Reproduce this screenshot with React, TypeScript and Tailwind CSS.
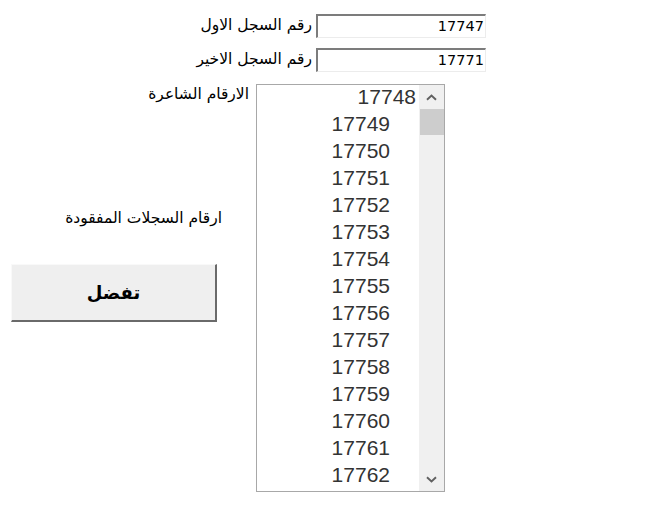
import React from "react";

const items = [17748, 17749, 17750, 17751, 17752, 17753, 17754, 17755, 17756, 17757, 17758, 17759, 17760, 17761, 17762];

function Field({ label, value }: { label: string; value: string }) {
  return (
    <div className="flex items-center justify-end w-[486px] h-[24px]">
      <span className="text-[15.5px] text-black mr-[4px] leading-none" dir="rtl" style={{ fontFamily: '"DejaVu Sans", sans-serif' }}>
        {label}
      </span>
      <div className="w-[170px] h-[24px] bg-white border-t-2 border-l-2 border-r border-b border-t-[#7c7c7c] border-l-[#7c7c7c] border-r-[#ececec] border-b-[#ececec] flex items-center justify-end pr-[1px] text-[14.5px] text-black" style={{ fontFamily: '"DejaVu Sans", sans-serif' }}>
        {value}
      </div>
    </div>
  );
}

export default function App() {
  return (
    <div className="w-[671px] h-[507px] bg-white relative overflow-hidden" style={{ fontFamily: '"DejaVu Sans", sans-serif' }}>
      <div className="flex flex-col pt-[14px] gap-[10px]">
        <Field label="رقم السجل الاول" value="17747" />
        <Field label="رقم السجل الاخير" value="17771" />
      </div>
      <div className="flex mt-[12px]">
        <div className="w-[256px] flex flex-col">
          <div className="text-right pr-[7px] text-[15.5px] leading-[20px]" dir="rtl">الارقام الشاعرة</div>
          <div className="text-right pr-[34px] text-[15.5px] leading-[20px] mt-[104px]" dir="rtl">ارقام السجلات المفقودة</div>
          <button className="ml-[11px] mt-[36px] w-[206px] h-[58px] bg-[#efefef] border-t border-l border-t-[#f9f9f9] border-l-[#f9f9f9] border-r-2 border-b-2 border-r-[#6a6a6a] border-b-[#6a6a6a] flex items-center justify-center text-[18px] font-bold text-black" dir="rtl">
            تفضل
          </button>
        </div>
        <div className="w-[189px] h-[408px] border border-[#a8a8a8] flex bg-white">
          <div className="flex-1 flex flex-col overflow-hidden pt-0" style={{ fontFamily: '"Liberation Sans", Arial, sans-serif' }}>
            <div className="-mt-[2px] flex flex-col">
              {items.map((n, i) => (
                <div key={n} className={`h-[27px] shrink-0 leading-[27px] text-[21px] text-[#333333] text-right ${i === 0 ? "pr-[3px]" : "pr-[29px]"}`}>
                  {n}
                </div>
              ))}
            </div>
          </div>
          <div className="w-[25px] bg-[#f0f0f0] flex flex-col items-center">
            <div className="h-[24px] w-full flex items-center justify-center">
              <svg width="11" height="7" viewBox="0 0 11 7">
                <path d="M1 5.8 L5.5 1.5 L10 5.8" fill="none" stroke="#606060" strokeWidth="1.9" />
              </svg>
            </div>
            <div className="w-[24px] h-[26px] bg-[#cdcdcd]" />
            <div className="flex-1" />
            <div className="h-[24px] w-full flex items-center justify-center">
              <svg width="11" height="7" viewBox="0 0 11 7">
                <path d="M1 1.2 L5.5 5.5 L10 1.2" fill="none" stroke="#606060" strokeWidth="1.9" />
              </svg>
            </div>
          </div>
        </div>
      </div>
    </div>
  );
}
